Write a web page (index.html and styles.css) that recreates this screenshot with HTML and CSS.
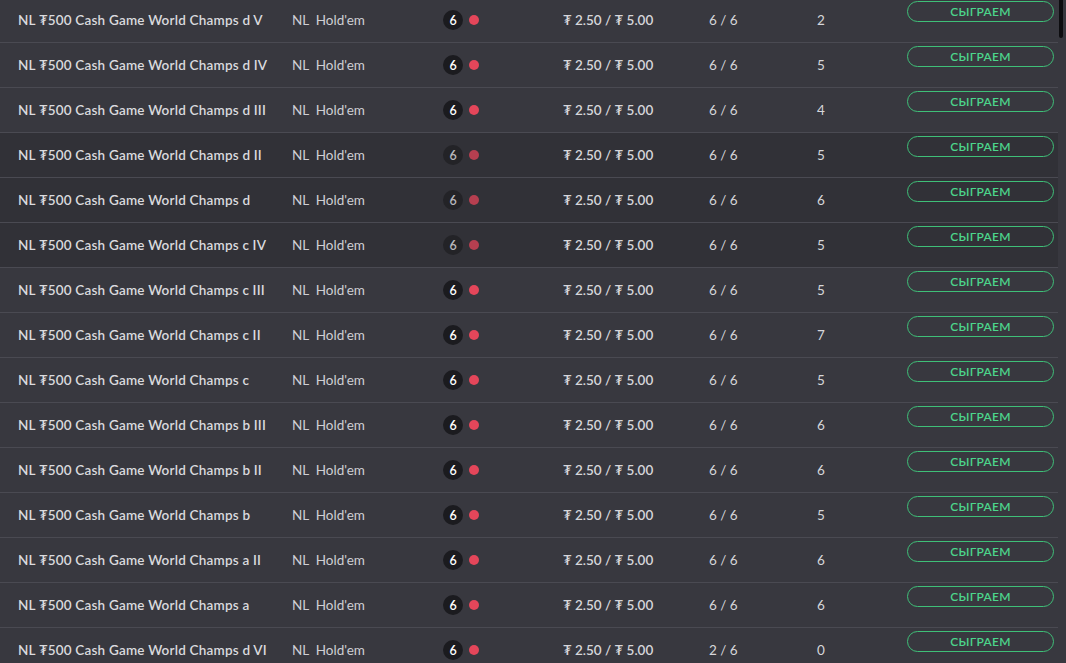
FILE: index.html
```html
<!DOCTYPE html>
<html lang="ru">
<head>
<meta charset="utf-8">
<title>Cash Games</title>
<link rel="stylesheet" href="styles.css">
</head>
<body>
<div class="frame">
  <div class="list">
    <div class="row"><div class="c-name">NL ₮500 Cash Game World Champs d V</div><div class="c-game">NL&nbsp; Hold'em</div><div class="c-seat"><span class="badge">6</span><span class="dot"></span></div><div class="c-stakes">₮ 2.50 / ₮ 5.00</div><div class="c-pl">6 / 6</div><div class="c-wait">2</div><div class="c-act"><button class="play">СЫГРАЕМ</button></div></div>
    <div class="row"><div class="c-name">NL ₮500 Cash Game World Champs d IV</div><div class="c-game">NL&nbsp; Hold'em</div><div class="c-seat"><span class="badge">6</span><span class="dot"></span></div><div class="c-stakes">₮ 2.50 / ₮ 5.00</div><div class="c-pl">6 / 6</div><div class="c-wait">5</div><div class="c-act"><button class="play">СЫГРАЕМ</button></div></div>
    <div class="row"><div class="c-name">NL ₮500 Cash Game World Champs d III</div><div class="c-game">NL&nbsp; Hold'em</div><div class="c-seat"><span class="badge">6</span><span class="dot"></span></div><div class="c-stakes">₮ 2.50 / ₮ 5.00</div><div class="c-pl">6 / 6</div><div class="c-wait">4</div><div class="c-act"><button class="play">СЫГРАЕМ</button></div></div>
    <div class="row dim"><div class="c-name">NL ₮500 Cash Game World Champs d II</div><div class="c-game">NL&nbsp; Hold'em</div><div class="c-seat"><span class="badge">6</span><span class="dot"></span></div><div class="c-stakes">₮ 2.50 / ₮ 5.00</div><div class="c-pl">6 / 6</div><div class="c-wait">5</div><div class="c-act"><button class="play">СЫГРАЕМ</button></div></div>
    <div class="row dim"><div class="c-name">NL ₮500 Cash Game World Champs d</div><div class="c-game">NL&nbsp; Hold'em</div><div class="c-seat"><span class="badge">6</span><span class="dot"></span></div><div class="c-stakes">₮ 2.50 / ₮ 5.00</div><div class="c-pl">6 / 6</div><div class="c-wait">6</div><div class="c-act"><button class="play">СЫГРАЕМ</button></div></div>
    <div class="row dim"><div class="c-name">NL ₮500 Cash Game World Champs c IV</div><div class="c-game">NL&nbsp; Hold'em</div><div class="c-seat"><span class="badge">6</span><span class="dot"></span></div><div class="c-stakes">₮ 2.50 / ₮ 5.00</div><div class="c-pl">6 / 6</div><div class="c-wait">5</div><div class="c-act"><button class="play">СЫГРАЕМ</button></div></div>
    <div class="row"><div class="c-name">NL ₮500 Cash Game World Champs c III</div><div class="c-game">NL&nbsp; Hold'em</div><div class="c-seat"><span class="badge">6</span><span class="dot"></span></div><div class="c-stakes">₮ 2.50 / ₮ 5.00</div><div class="c-pl">6 / 6</div><div class="c-wait">5</div><div class="c-act"><button class="play">СЫГРАЕМ</button></div></div>
    <div class="row"><div class="c-name">NL ₮500 Cash Game World Champs c II</div><div class="c-game">NL&nbsp; Hold'em</div><div class="c-seat"><span class="badge">6</span><span class="dot"></span></div><div class="c-stakes">₮ 2.50 / ₮ 5.00</div><div class="c-pl">6 / 6</div><div class="c-wait">7</div><div class="c-act"><button class="play">СЫГРАЕМ</button></div></div>
    <div class="row"><div class="c-name">NL ₮500 Cash Game World Champs c</div><div class="c-game">NL&nbsp; Hold'em</div><div class="c-seat"><span class="badge">6</span><span class="dot"></span></div><div class="c-stakes">₮ 2.50 / ₮ 5.00</div><div class="c-pl">6 / 6</div><div class="c-wait">5</div><div class="c-act"><button class="play">СЫГРАЕМ</button></div></div>
    <div class="row"><div class="c-name">NL ₮500 Cash Game World Champs b III</div><div class="c-game">NL&nbsp; Hold'em</div><div class="c-seat"><span class="badge">6</span><span class="dot"></span></div><div class="c-stakes">₮ 2.50 / ₮ 5.00</div><div class="c-pl">6 / 6</div><div class="c-wait">6</div><div class="c-act"><button class="play">СЫГРАЕМ</button></div></div>
    <div class="row"><div class="c-name">NL ₮500 Cash Game World Champs b II</div><div class="c-game">NL&nbsp; Hold'em</div><div class="c-seat"><span class="badge">6</span><span class="dot"></span></div><div class="c-stakes">₮ 2.50 / ₮ 5.00</div><div class="c-pl">6 / 6</div><div class="c-wait">6</div><div class="c-act"><button class="play">СЫГРАЕМ</button></div></div>
    <div class="row"><div class="c-name">NL ₮500 Cash Game World Champs b</div><div class="c-game">NL&nbsp; Hold'em</div><div class="c-seat"><span class="badge">6</span><span class="dot"></span></div><div class="c-stakes">₮ 2.50 / ₮ 5.00</div><div class="c-pl">6 / 6</div><div class="c-wait">5</div><div class="c-act"><button class="play">СЫГРАЕМ</button></div></div>
    <div class="row"><div class="c-name">NL ₮500 Cash Game World Champs a II</div><div class="c-game">NL&nbsp; Hold'em</div><div class="c-seat"><span class="badge">6</span><span class="dot"></span></div><div class="c-stakes">₮ 2.50 / ₮ 5.00</div><div class="c-pl">6 / 6</div><div class="c-wait">6</div><div class="c-act"><button class="play">СЫГРАЕМ</button></div></div>
    <div class="row"><div class="c-name">NL ₮500 Cash Game World Champs a</div><div class="c-game">NL&nbsp; Hold'em</div><div class="c-seat"><span class="badge">6</span><span class="dot"></span></div><div class="c-stakes">₮ 2.50 / ₮ 5.00</div><div class="c-pl">6 / 6</div><div class="c-wait">6</div><div class="c-act"><button class="play">СЫГРАЕМ</button></div></div>
    <div class="row"><div class="c-name">NL ₮500 Cash Game World Champs d VI</div><div class="c-game">NL&nbsp; Hold'em</div><div class="c-seat"><span class="badge">6</span><span class="dot"></span></div><div class="c-stakes">₮ 2.50 / ₮ 5.00</div><div class="c-pl">2 / 6</div><div class="c-wait">0</div><div class="c-act"><button class="play">СЫГРАЕМ</button></div></div>
  </div>
  <div class="scrollbar"><div class="thumb"></div></div>
</div>
</body>
</html>
```

FILE: styles.css
```css
html, body {
  margin: 0;
  padding: 0;
  background: #38383f;
  overflow: hidden;
}
body {
  font-family: "Lato", "DejaVu Sans", sans-serif;
  color: #d6d6da;
  font-size: 13px;
}
.frame {
  display: flex;
  height: 663px;
  overflow: hidden;
}
.list {
  width: 1058px;
  margin-top: -2px;
  flex: none;
}
.row {
  display: flex;
  align-items: center;
  height: 44px;
  border-bottom: 1px solid #4a4a52;
  background: #38383f;
}
.row.dim {
  background: #313137;
}
.c-name {
  width: 274px;
  padding-left: 18px;
  font-weight: 600;
  font-size: 13.5px;
  white-space: nowrap;
  letter-spacing: 0.2px;
  color: #dadade;
}
.c-game {
  width: 151px;
  font-size: 13.5px;
  color: #cfcfd4;
}
.c-seat {
  width: 120px;
  display: flex;
  align-items: center;
  gap: 6px;
}
.badge {
  width: 20px;
  height: 20px;
  border-radius: 50%;
  background: #1b1b1f;
  color: #ffffff;
  font-weight: 600;
  font-size: 12.5px;
  display: flex;
  align-items: center;
  justify-content: center;
}
.dot {
  width: 10px;
  height: 10px;
  border-radius: 50%;
  background: #e4465a;
}
.dim .badge {
  background: #232327;
  color: #b8b8bd;
}
.dim .dot {
  background: #b63f50;
}
.c-stakes {
  width: 146px;
  font-weight: 600;
  font-size: 13.5px;
  white-space: nowrap;
}
.c-pl {
  width: 108px;
  font-size: 13.5px;
}
.c-wait {
  width: 90px;
  font-size: 13.5px;
}
.c-act {
  align-self: flex-start;
  padding-top: 3px;
}
.play {
  width: 147px;
  height: 21px;
  border: 1.5px solid #3fbf78;
  border-radius: 11px;
  background: transparent;
  color: #4cd58b;
  font-family: "Lato", "DejaVu Sans", sans-serif;
  font-weight: 600;
  font-size: 12px;
  letter-spacing: 0.3px;
  padding: 0;
  line-height: 18px;
  cursor: pointer;
}
.scrollbar {
  width: 8px;
  flex: none;
  background: #38383f;
  display: flex;
  flex-direction: column;
}
.thumb {
  width: 4px;
  height: 38px;
  margin-left: 1px;
  background: #0d0d10;
  border-radius: 0 0 2px 2px;
}
```
